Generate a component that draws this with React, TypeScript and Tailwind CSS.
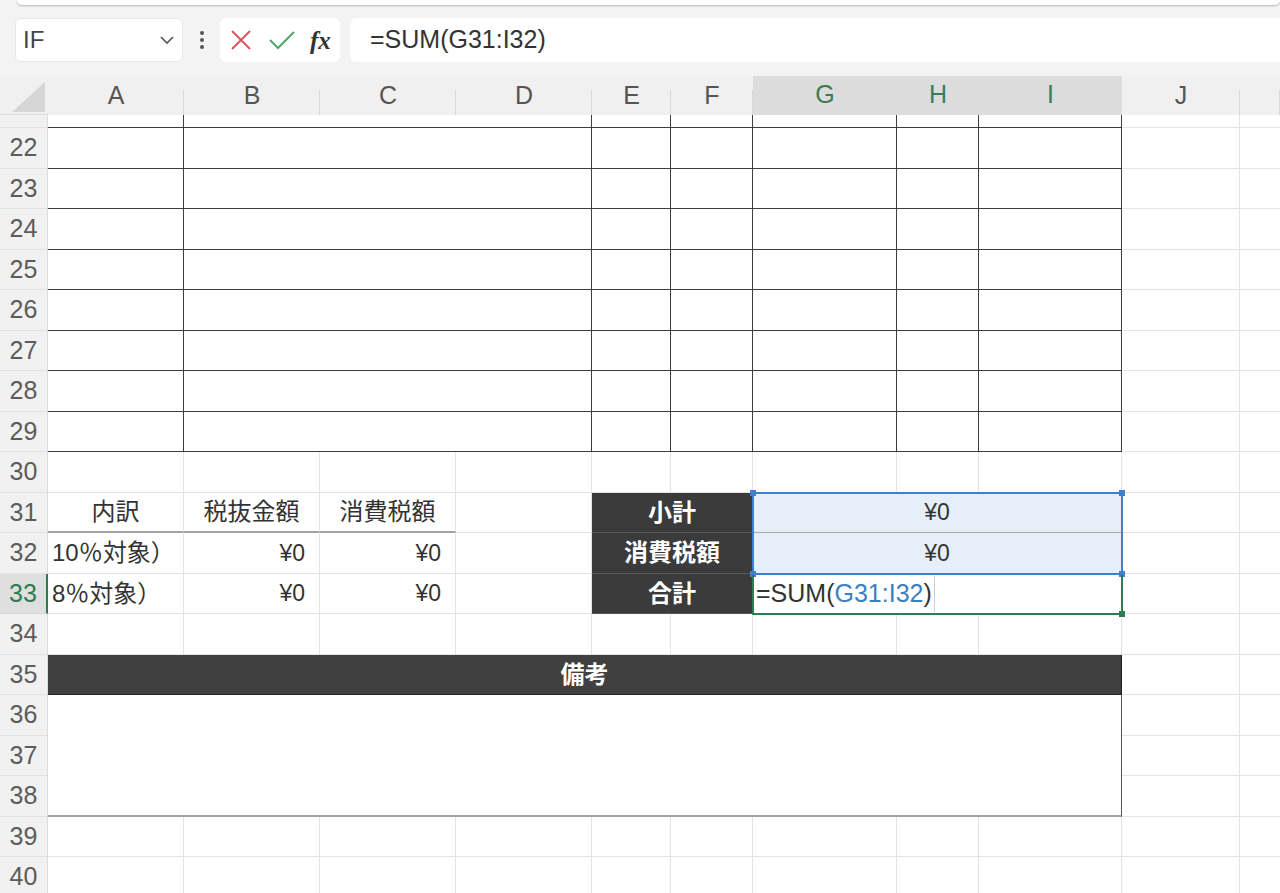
import React from 'react';

const FONT = "font-['Liberation_Sans','Noto_Sans_CJK_JP',sans-serif]";
const COLS = "grid grid-cols-[136px_136px_136px_136px_79px_82px_144px_82px_143px_118px_1fr]";
const GL = "border-r border-b border-[#e3e3e3]";
const GLK = "border-b border-[#e3e3e3]";
const BK = "border-r border-b border-[#3d3d3d]";
const DARK = "col-span-2 bg-[#3b3b3b] border-r border-b border-[#585858] flex items-center justify-center text-white font-bold text-[24px]";
const SEL = "col-span-3 bg-[#e6eef8] border-r border-b border-[#e3e3e3] border-b-[#a8a8a8] flex items-center justify-center text-[23px] text-[#333]";
const HEADA = "border-r border-b-2 border-[#e3e3e3] border-b-[#a3a3a3] flex items-center justify-center text-[24px] text-[#333]";
const RIGHT = "border-r border-b border-[#e3e3e3] flex items-center justify-end pr-[14px] text-[23px] text-[#333]";
const LEFT = "border-r border-b border-[#e3e3e3] flex items-center pl-[4px] text-[24px] text-[#333] whitespace-nowrap overflow-hidden";

function Row({ n, h, active, children }: { n: number; h: string; active?: boolean; children: React.ReactNode }) {
  return (
    <div className={`flex ${h}`}>
      <div
        className={
          active
            ? "w-[48px] shrink-0 flex items-center justify-center bg-[#dfdfdf] text-[#2e7d52] border-b border-[#d6d6d6] border-r-2 border-r-[#2e7d52] text-[25px]"
            : "w-[48px] shrink-0 flex items-center justify-center bg-[#f1f1f1] text-[#5c5c5c] border-b border-[#e2e2e2] border-r border-r-[#dcdcdc] text-[25px]"
        }
      >
        {n}
      </div>
      <div className={`flex-1 ${COLS}`}>{children}</div>
    </div>
  );
}

function Blank() {
  return (
    <>
      <div className={GL} />
      <div className={GL} />
      <div className={GL} />
      <div className={GL} />
      <div className={GL} />
      <div className={GL} />
      <div className={GL} />
      <div className={GL} />
      <div className={GL} />
      <div className={GL} />
      <div className={GLK} />
    </>
  );
}

function TableCells() {
  return (
    <>
      <div className={BK} />
      <div className={`col-span-3 ${BK}`} />
      <div className={BK} />
      <div className={BK} />
      <div className={BK} />
      <div className={BK} />
      <div className={BK} />
      <div className={GL} />
      <div className={GLK} />
    </>
  );
}

const HEADERS: { l: string; sel?: boolean }[] = [
  { l: 'A' },
  { l: 'B' },
  { l: 'C' },
  { l: 'D' },
  { l: 'E' },
  { l: 'F' },
  { l: 'G', sel: true },
  { l: 'H', sel: true },
  { l: 'I', sel: true },
  { l: 'J' },
  { l: '' },
];

export default function App() {
  return (
    <div className={`w-[1280px] h-[893px] overflow-hidden bg-[#f3f3f3] flex flex-col ${FONT}`}>
      {/* ribbon edge */}
      <div className="h-[6px] pl-[17px] shrink-0">
        <div className="h-[5px] bg-white rounded-b-[6px] shadow-[0_1px_2px_rgba(0,0,0,0.25)]" />
      </div>

      {/* formula bar */}
      <div className="mt-[12px] h-[44px] shrink-0 flex items-stretch pl-[15px]">
        <div className="w-[168px] bg-white rounded-[6px] border border-[#e8e8e8] flex items-center justify-between pl-[7px] pr-[7px]">
          <span className="text-[24px] text-[#444]">IF</span>
          <svg width="16" height="10" viewBox="0 0 16 10">
            <path d="M2 2 L8 8 L14 2" fill="none" stroke="#555" strokeWidth="1.6" />
          </svg>
        </div>
        <div className="w-[37px] flex items-center justify-center">
          <svg width="6" height="20" viewBox="0 0 6 20">
            <circle cx="3" cy="3" r="2" fill="#555" />
            <circle cx="3" cy="10" r="2" fill="#555" />
            <circle cx="3" cy="17" r="2" fill="#555" />
          </svg>
        </div>
        <div className="w-[120px] bg-white rounded-[6px] flex items-center pl-[10px] gap-[16px]">
          <svg width="22" height="22" viewBox="0 0 22 22">
            <path d="M2 2 L20 20 M20 2 L2 20" stroke="#e0525f" strokeWidth="2" fill="none" />
          </svg>
          <svg width="28" height="22" viewBox="0 0 28 22">
            <path d="M2 11 L10 19 L26 3" stroke="#4ea869" strokeWidth="2" fill="none" />
          </svg>
          <span className="font-['Liberation_Serif',serif] italic font-bold text-[25px] text-[#333] leading-none -ml-[2px]">fx</span>
        </div>
        <div className="ml-[10px] flex-1 bg-white rounded-l-[6px] flex items-center pl-[20px] text-[25px] text-[#333]">
          =SUM(G31:I32)
        </div>
      </div>

      {/* column headers */}
      <div className="mt-[14px] h-[39px] shrink-0 flex bg-[#f0f0f0]">
        <div className="w-[48px] shrink-0 border-b border-[#dadada]">
          <svg width="48" height="38" viewBox="0 0 48 38">
            <path d="M45 6 L45 36 L12 36 Z" fill="#d6d6d6" />
          </svg>
        </div>
        <div className={`flex-1 ${COLS}`}>
          {HEADERS.map((h, i) => (
            <div
              key={i}
              className={
                h.sel
                  ? "relative flex items-center justify-center pb-[2px] bg-[#dcdcdc] text-[#3a7d55] text-[25px] border-b-2 border-[#2e7d52]"
                  : "relative flex items-center justify-center pb-[2px] text-[#555] text-[25px] border-b border-[#dadada]"
              }
            >
              {h.l}
              {!h.sel && <span className="absolute right-0 bottom-0 h-[27px] w-px bg-[#d8d8d8]" />}
            </div>
          ))}
        </div>
      </div>

      {/* body */}
      <div className="relative flex-1 overflow-hidden bg-white">
        <div className="-mt-[28px]">
          <Row n={21} h="h-[41px]"><TableCells /></Row>
          <Row n={22} h="h-[41px]"><TableCells /></Row>
          <Row n={23} h="h-[40px]"><TableCells /></Row>
          <Row n={24} h="h-[41px]"><TableCells /></Row>
          <Row n={25} h="h-[40px]"><TableCells /></Row>
          <Row n={26} h="h-[41px]"><TableCells /></Row>
          <Row n={27} h="h-[40px]"><TableCells /></Row>
          <Row n={28} h="h-[41px]"><TableCells /></Row>
          <Row n={29} h="h-[40px]"><TableCells /></Row>
          <Row n={30} h="h-[41px]"><Blank /></Row>
          <Row n={31} h="h-[40px]">
            <div className={HEADA}>内訳</div>
            <div className={HEADA}>税抜金額</div>
            <div className={HEADA}>消費税額</div>
            <div className={GL} />
            <div className={DARK}>小計</div>
            <div className={SEL}>¥0</div>
            <div className={GL} />
            <div className={GLK} />
          </Row>
          <Row n={32} h="h-[41px]">
            <div className={LEFT}>10％対象）</div>
            <div className={RIGHT}>¥0</div>
            <div className={RIGHT}>¥0</div>
            <div className={GL} />
            <div className={DARK}>消費税額</div>
            <div className="col-span-3 bg-[#e6eef8] border-r border-b border-[#e3e3e3] flex items-center justify-center text-[23px] text-[#333]">¥0</div>
            <div className={GL} />
            <div className={GLK} />
          </Row>
          <Row n={33} h="h-[40px]" active>
            <div className={LEFT}>8％対象）</div>
            <div className={RIGHT}>¥0</div>
            <div className={RIGHT}>¥0</div>
            <div className={GL} />
            <div className={DARK}>合計</div>
            <div className="col-span-3 border-r border-b border-[#e3e3e3] flex items-center pl-[3px] text-[25px] text-[#333]">
              <span>=SUM(</span>
              <span className="text-[#3b7fc4]">G31:I32</span>
              <span>)</span>
              <span className="ml-[2px] w-px h-[36px] bg-[#cfcfcf]" />
            </div>
            <div className={GL} />
            <div className={GLK} />
          </Row>
          <Row n={34} h="h-[41px]"><Blank /></Row>
          <Row n={35} h="h-[40px]">
            <div className="col-span-9 bg-[#404040] border-r border-b border-[#222] flex items-center justify-center text-white font-bold text-[24px]">備考</div>
            <div className={GL} />
            <div className={GLK} />
          </Row>
          <Row n={36} h="h-[41px]">
            <div className="col-span-9 bg-white border-r border-[#555]" />
            <div className={GL} />
            <div className={GLK} />
          </Row>
          <Row n={37} h="h-[40px]">
            <div className="col-span-9 bg-white border-r border-[#555]" />
            <div className={GL} />
            <div className={GLK} />
          </Row>
          <Row n={38} h="h-[41px]">
            <div className="col-span-9 bg-white border-r border-b-2 border-[#555] border-b-[#a3a3a3]" />
            <div className={GL} />
            <div className={GLK} />
          </Row>
          <Row n={39} h="h-[40px]"><Blank /></Row>
          <Row n={40} h="h-[41px]"><Blank /></Row>
        </div>

        {/* range highlight G31:I32 */}
        <div className="absolute left-[752px] top-[377px] w-[371px] h-[83px] border-2 border-[#3f7fd0]">
          <span className="absolute -left-[4px] -top-[4px] w-[6px] h-[6px] bg-[#3f7fd0]" />
          <span className="absolute -right-[4px] -top-[4px] w-[6px] h-[6px] bg-[#3f7fd0]" />
          <span className="absolute -left-[4px] -bottom-[4px] w-[6px] h-[6px] bg-[#3f7fd0]" />
          <span className="absolute -right-[4px] -bottom-[4px] w-[6px] h-[6px] bg-[#3f7fd0]" />
        </div>
        {/* active cell G33 */}
        <div className="absolute left-[752px] top-[460px] w-[371px] h-[40px] border-2 border-t-0 border-[#2e7d52]">
          <span className="absolute -right-[4px] -bottom-[4px] w-[6px] h-[6px] bg-[#2e7d52]" />
        </div>
      </div>
    </div>
  );
}
